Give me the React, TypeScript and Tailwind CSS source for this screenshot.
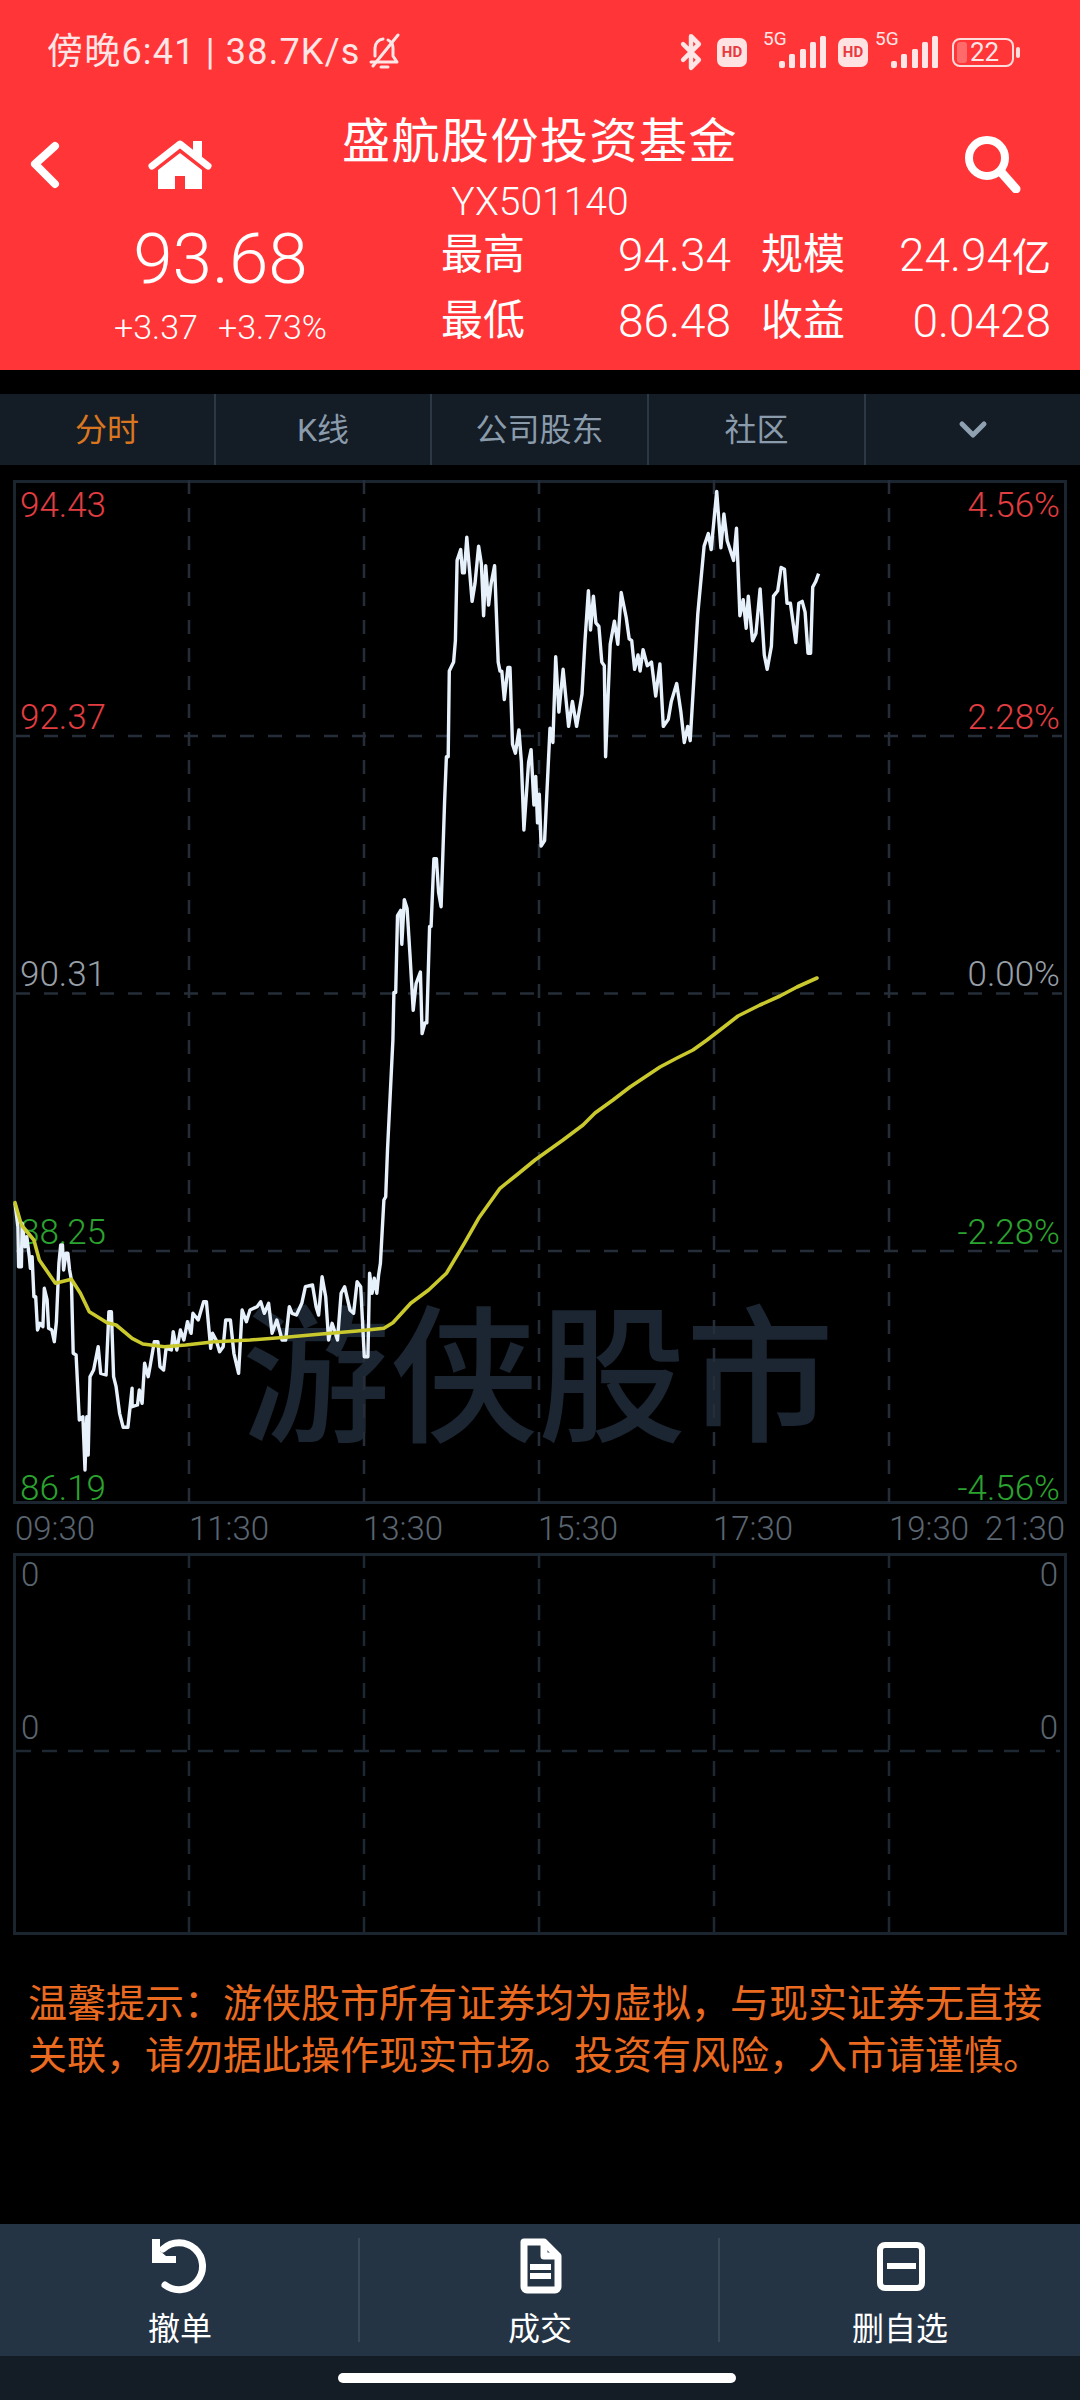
import { Bluetooth } from 'lucide-react';

type Pt = [number, number];

// traced from the crops: each trace has its own scale
const fromLow = (p: Pt[]): Pt[] => p.map(([x, y]) => [x / 2.8, 1150 + y / 3]);
const fromMid = (p: Pt[]): Pt[] => p.map(([x, y]) => [x / 2.8, 480 + y / 2.8]);
const fromRight = (p: Pt[]): Pt[] => p.map(([x, y]) => [420 + x / 2.376, 480 + y / 2.8]);

const priceLine: Pt[] = [
  ...fromLow([
    [42, 160], [50, 230], [52, 350], [60, 350], [62, 220], [70, 290], [75, 260], [82, 320], [85, 355], [90, 320],
    [95, 440], [100, 440], [105, 540], [112, 520], [120, 530], [124, 415], [132, 450], [136, 535], [145, 540],
    [152, 575], [158, 515], [165, 340], [170, 285], [175, 285], [178, 360], [185, 310], [190, 310], [195, 360],
    [200, 390], [205, 610], [213, 615], [222, 810], [232, 800], [238, 960], [243, 800], [247, 915], [252, 680],
    [262, 660], [275, 590], [282, 670], [297, 675], [305, 485], [312, 485], [318, 680], [325, 710], [335, 790],
    [345, 832], [358, 832], [370, 715], [370, 770], [385, 765], [390, 720], [398, 760], [405, 640], [415, 680],
    [420, 650], [432, 575], [442, 575], [448, 650], [458, 660], [465, 595], [480, 600], [485, 545], [495, 600],
    [505, 540], [515, 570], [525, 515], [535, 550], [540, 490], [555, 510], [570, 455], [578, 455], [590, 595],
    [595, 550], [605, 570], [615, 605], [625, 590], [632, 510], [645, 510], [655, 610], [668, 670], [678, 480],
    [690, 515], [700, 480], [720, 470], [730, 455], [740, 490], [752, 460], [762, 550], [775, 510], [790, 570],
    [800, 570], [810, 470], [818, 490], [830, 495], [845, 460], [855, 410], [875, 405], [885, 470], [892, 495],
    [902, 380], [912, 440], [920, 570], [930, 520], [945, 570], [955, 430], [965, 410], [980, 480], [990, 490],
    [1000, 395], [1010, 410], [1020, 620], [1030, 620], [1035, 370], [1042, 430], [1048, 385], [1055, 430],
    [1060, 375], [1065, 340], [1075, 150], [1080, 140], [1085, 0],
  ]),
  ...fromMid([
    [1100, 1568], [1103, 1435], [1108, 1435], [1113, 1220], [1122, 1205], [1125, 1300], [1132, 1175], [1140, 1200],
    [1148, 1330], [1157, 1485], [1165, 1410], [1177, 1378], [1182, 1550], [1190, 1520], [1195, 1520], [1203, 1250],
    [1207, 1250], [1215, 1060], [1222, 1060], [1228, 1155], [1235, 1195], [1245, 900], [1250, 775], [1255, 775],
    [1258, 535], [1270, 510], [1275, 450], [1280, 225], [1290, 195], [1295, 260], [1300, 260], [1307, 160],
    [1322, 340], [1330, 290], [1340, 185], [1348, 235], [1354, 380], [1360, 240], [1368, 350], [1375, 290],
    [1385, 240], [1395, 510], [1400, 535], [1405, 535], [1412, 615], [1422, 525], [1428, 525], [1435, 740],
    [1443, 765], [1453, 700], [1460, 790], [1467, 980], [1480, 790], [1487, 755], [1495, 910], [1500, 830],
    [1505, 960], [1510, 880], [1515, 1025], [1525, 1010], [1540, 695], [1548, 735], [1556, 495],
  ]),
  ...fromRight([
    [330, 650], [340, 530], [353, 690], [362, 620], [372, 690], [385, 600], [392, 450], [400, 310], [405, 420],
    [412, 325], [418, 400], [425, 410], [432, 510], [438, 520], [441, 775], [452, 460], [462, 395], [470, 460],
    [478, 315], [490, 385], [497, 445], [503, 450], [510, 530], [518, 490], [523, 535], [530, 475], [540, 520],
    [550, 510], [560, 605], [570, 515], [578, 690], [590, 670], [597, 620], [610, 570], [620, 650], [628, 735],
    [636, 690], [642, 730], [650, 570], [660, 375], [675, 185], [685, 150], [692, 195], [705, 32], [715, 190],
    [722, 95], [730, 170], [745, 225], [752, 135], [760, 380], [768, 335], [775, 415], [780, 325], [790, 450],
    [798, 430], [808, 305], [818, 490], [825, 530], [835, 465], [840, 325], [850, 310], [858, 245], [866, 250],
    [872, 345], [880, 345], [893, 455], [900, 345], [908, 340], [915, 370], [922, 485], [928, 485], [933, 300],
    [940, 285], [947, 262],
  ]),
];

const avgLine: Pt[] = [
  ...fromLow([
    [42, 158], [60, 225], [95, 270], [110, 330], [155, 400], [200, 388], [225, 430], [250, 485], [300, 518],
    [325, 525], [370, 565], [400, 582], [460, 590], [520, 585], [600, 575], [700, 570], [800, 562], [900, 552],
    [1000, 543], [1075, 535], [1100, 518], [1150, 460], [1200, 420], [1250, 370], [1300, 280], [1340, 205],
    [1400, 115], [1450, 72],
  ]),
  [535, 1160], [563, 1140], [583, 1125], [595, 1113], [613, 1100], [630, 1087], [645, 1077],
  [660, 1067], [677, 1058], [693, 1050], [707, 1040], [720, 1030], [738, 1016], [760, 1005], [780, 996],
  [797, 987], [817, 978],
];

const toPoints = (p: Pt[]) => p.map(([x, y]) => `${x.toFixed(1)},${y.toFixed(1)}`).join(' ');

const tabs = ['分时', 'K线', '公司股东', '社区'];
const gridX = [189, 364, 539, 714, 889];

// full-width punctuation, as in the app
const noteLine1 = '温馨提示\uFF1A游侠股市所有证券均为虚拟\uFF0C与现实证券无直接';
const noteLine2 = '关联\uFF0C请勿据此操作现实市场。投资有风险\uFF0C入市请谨慎。';

function SignalBars() {
  return (
    <svg width="48" height="32" viewBox="0 0 48 32" fill="currentColor">
      <rect x="1" y="25" width="6" height="7" rx="2" />
      <rect x="11" y="18" width="6" height="14" rx="1.5" />
      <rect x="22" y="13" width="6" height="19" rx="1.5" />
      <rect x="32" y="6" width="6" height="26" rx="1.5" />
      <rect x="42" y="0" width="6" height="32" rx="1.5" />
    </svg>
  );
}

function HdBadge() {
  return (
    <div className="w-[30px] h-[29px] rounded-[7px] bg-[#ffe3e3] flex items-center justify-center text-[#e83a40] text-[15px] font-bold leading-none">
      HD
    </div>
  );
}

function StatusBar() {
  return (
    <div className="h-[104px] flex items-center justify-between pl-[47px] pr-[60px] text-[#ffe6e6]">
      <div className="flex items-center">
        <span className="text-[36px] tracking-[1.2px] leading-none whitespace-nowrap">傍晚6:41 | 38.7K/s</span>
        <svg className="ml-[6px]" width="38" height="38" viewBox="0 0 38 38" fill="none" stroke="currentColor" strokeWidth="3" strokeLinecap="round" strokeLinejoin="round">
          <path d="M5 29h26l-4-6V15a9 9 0 0 0-5-8" />
          <path d="M9 23v-8a9 9 0 0 1 8-9" />
          <path d="M7 33 32 2" />
          <path d="M15 34h7" />
        </svg>
      </div>
      <div className="flex items-center">
        <Bluetooth className="w-[38px] h-[46px] -mx-[7px]" strokeWidth={2.8} />
        <div className="ml-[14px]"><HdBadge /></div>
        <div className="relative ml-[14px] w-[65px] h-[32px] flex justify-end">
          <span className="absolute -top-[7px] left-[2px] text-[19px] leading-none">5G</span>
          <SignalBars />
        </div>
        <div className="ml-[12px]"><HdBadge /></div>
        <div className="relative ml-[7px] w-[63px] h-[32px] flex justify-end">
          <span className="absolute -top-[7px] left-0 text-[19px] leading-none">5G</span>
          <SignalBars />
        </div>
        <div className="ml-[14px] flex items-center">
          <div className="w-[62px] h-[29px] rounded-[8px] border-2 border-[#ffdcdc] flex items-center pl-[3px]">
            <div className="w-[10px] h-[21px] rounded-[3px] bg-[#ff6b6b]" />
            <span className="ml-[3px] text-[26px] leading-none">22</span>
          </div>
          <div className="ml-[2px] w-[4px] h-[11px] rounded-full bg-[#ffdcdc]" />
        </div>
      </div>
    </div>
  );
}

function NavBar() {
  return (
    <div className="h-[120px] grid grid-cols-[280px_1fr_280px] items-center text-white">
      <svg width="200" height="75" viewBox="0 0 200 75" className="ml-[20px] -mt-[2px]">
        <path d="M35 20 15 38 35 58" fill="none" stroke="white" strokeWidth="8" strokeLinecap="round" strokeLinejoin="round" />
        <path d="M132 40 160 18 188 40" fill="none" stroke="white" strokeWidth="7" strokeLinecap="round" strokeLinejoin="round" />
        <path d="M173 15h9v17l-9-7z" fill="white" />
        <path d="M138 44 160 27l22 17v19h-17V50h-10v13h-17z" fill="white" />
      </svg>
      <div className="flex flex-col items-center">
        <div className="h-[76px] flex items-center text-[48px] tracking-[1.5px] leading-none whitespace-nowrap">盛航股份投资基金</div>
        <div className="h-[44px] flex items-center text-[39px] font-light leading-none">YX501140</div>
      </div>
      <div className="flex justify-end pr-[58px]">
        <svg width="58" height="58" viewBox="0 0 58 58" fill="none" stroke="white" strokeLinecap="round">
          <circle cx="23" cy="23" r="18" strokeWidth="8" />
          <path d="M37 37 52 54" strokeWidth="9" />
        </svg>
      </div>
    </div>
  );
}

function StatRow({ a, b, c, d, unit }: { a: string; b: string; c: string; d: string; unit?: string }) {
  return (
    <div className="h-[66px] flex items-center gap-[30px]">
      <div className="w-[290px] flex items-center justify-between">
        <span className="text-[42px] leading-none">{a}</span>
        <span className="text-[46px] font-light leading-none">{b}</span>
      </div>
      <div className="w-[290px] flex items-center justify-between">
        <span className="text-[42px] leading-none">{c}</span>
        <span className="text-[46px] font-light leading-none">
          {d}
          {unit && <span className="text-[39px] font-normal">{unit}</span>}
        </span>
      </div>
    </div>
  );
}

function Header() {
  return (
    <header className="h-[370px] bg-[#ff3538] text-white flex flex-col">
      <StatusBar />
      <NavBar />
      <div className="flex">
        <div className="w-[441px] flex flex-col items-center">
          <div className="mt-[-1px] h-[70px] flex items-center text-[71px] font-light leading-none">93.68</div>
          <div className="mt-[14px] h-[40px] flex items-center gap-[20px] text-[34px] font-light leading-none">
            <span>+3.37</span>
            <span>+3.73%</span>
          </div>
        </div>
        <div className="-mt-[2px]">
          <StatRow a="最高" b="94.34" c="规模" d="24.94" unit="亿" />
          <StatRow a="最低" b="86.48" c="收益" d="0.0428" />
        </div>
      </div>
    </header>
  );
}

function Tabs() {
  return (
    <nav className="mt-[24px] h-[71px] bg-[#141c26] grid grid-cols-[216px_216px_217px_217px_1fr] text-[32px] text-[#8a9bab]">
      {tabs.map((t, i) => (
        <div key={t} className={`flex items-center justify-center border-r-2 border-[#2a3744] ${i === 0 ? 'text-[#d9761f]' : ''}`}>
          {t}
        </div>
      ))}
      <div className="flex items-center justify-center">
        <svg width="30" height="20" viewBox="0 0 30 20" fill="none" stroke="#8fa0b0" strokeWidth="5" strokeLinecap="round" strokeLinejoin="round">
          <path d="M4 4 15 15 26 4" />
        </svg>
      </div>
    </nav>
  );
}

function AxisLabels({ left, right }: { left: string; right: string }) {
  return (
    <div className="flex justify-between pl-[4px] pr-[4px]">
      <span>{left}</span>
      <span>{right}</span>
    </div>
  );
}

function MainChart() {
  return (
    <div className="relative mt-[15px] mx-[13px] h-[1024px] border-[3px] border-[#1b2530]">
      {/* watermark */}
      <div className="absolute top-[823px] left-[226px] text-[#1b2632] text-[148px] leading-none font-medium whitespace-nowrap">
        游侠股市
      </div>
      <div className="relative text-[35px] font-light leading-[24px]">
        <div className="h-[253px] pt-[11px] pb-[6px] flex flex-col justify-between text-[#e23d40]">
          <AxisLabels left="94.43" right="4.56%" />
          <AxisLabels left="92.37" right="2.28%" />
        </div>
        <div className="h-[257px] pb-[6px] flex flex-col justify-end text-[#979fa7]">
          <AxisLabels left="90.31" right="0.00%" />
        </div>
        <div className="h-[258px] pb-[6px] flex flex-col justify-end text-[#2ba32f]">
          <AxisLabels left="88.25" right="-2.28%" />
        </div>
        <div className="h-[250px] flex flex-col justify-end text-[#2ba32f]">
          <AxisLabels left="86.19" right="-4.56%" />
        </div>
      </div>
      <svg className="absolute -top-[3px] -left-[3px] overflow-visible" width="1054" height="1024" viewBox="13 480 1054 1024">
        <g stroke="#252e38" strokeWidth="2.5" strokeDasharray="14 14" fill="none">
          {gridX.map((x) => (
            <line key={x} x1={x} y1="480" x2={x} y2="1503" />
          ))}
          {[736, 993.5, 1251].map((y) => (
            <line key={y} x1="16" y1={y} x2="1062" y2={y} />
          ))}
        </g>
        <polyline points={toPoints(priceLine)} fill="none" stroke="#e6f1fb" strokeWidth="3.4" strokeLinejoin="round" />
        <polyline points={toPoints(avgLine)} fill="none" stroke="#c9c92e" strokeWidth="3.6" strokeLinejoin="round" strokeLinecap="round" />
      </svg>
    </div>
  );
}

function TimeAxis() {
  return (
    <div className="h-[49px] pl-[15px] grid grid-cols-[174px_174px_175px_175px_176px_96px_auto] items-center text-[33px] font-light leading-none text-[#5a6570]">
      <span>09:30</span>
      <span>11:30</span>
      <span>13:30</span>
      <span>15:30</span>
      <span>17:30</span>
      <span>19:30</span>
      <span>21:30</span>
    </div>
  );
}

function VolumeChart() {
  return (
    <div className="relative mx-[13px] h-[382px] border-[3px] border-[#1b2530] text-[33px] font-light leading-[28px] text-[#5a6570]">
      <div className="h-[195px] pt-[5px] pb-[9px] flex flex-col justify-between">
        <div className="flex justify-between pl-[5px] pr-[6px]">
          <span>0</span>
          <span>0</span>
        </div>
        <div className="flex justify-between pl-[5px] pr-[6px]">
          <span>0</span>
          <span>0</span>
        </div>
      </div>
      <svg className="absolute -top-[3px] -left-[3px]" width="1054" height="382" viewBox="13 1553 1054 382">
        <g stroke="#1e2833" strokeWidth="2.5" strokeDasharray="15 11" fill="none">
          {gridX.map((x) => (
            <line key={x} x1={x} y1="1553" x2={x} y2="1934" />
          ))}
          <line x1="16" y1="1751" x2="1060" y2="1751" />
        </g>
      </svg>
    </div>
  );
}

function UndoIcon() {
  return (
    <svg className="ml-[20px]" width="120" height="70" viewBox="0 0 120 70" fill="none" stroke="white">
      <path d="M33 18A23.5 23.5 0 1 1 35 54" strokeWidth="7" strokeLinecap="round" />
      <path d="M22 8h8v12l6 5h10v7H22z" fill="white" stroke="none" />
    </svg>
  );
}

function DocIcon() {
  return (
    <svg className="ml-[40px]" width="120" height="70" viewBox="0 0 120 70" fill="none" stroke="white" strokeWidth="7" strokeLinejoin="round">
      <path d="M24 11h20l14 14v31a3 3 0 0 1-3 3H27a3 3 0 0 1-3-3z" />
      <path d="M44 11v14h14" />
      <path d="M30 36h21M30 45h21" strokeWidth="6" />
    </svg>
  );
}

function MinusIcon() {
  return (
    <svg className="ml-[2px]" width="120" height="70" viewBox="0 0 120 70" fill="none" stroke="white">
      <rect x="39" y="14" width="42" height="43" rx="5" strokeWidth="6" />
      <path d="M46 35h29" strokeWidth="6" />
    </svg>
  );
}

function BottomBar() {
  const items = [
    { label: '撤单', icon: <UndoIcon /> },
    { label: '成交', icon: <DocIcon /> },
    { label: '删自选', icon: <MinusIcon /> },
  ];
  return (
    <div className="h-[132px] bg-[#243445] grid grid-cols-3 text-white">
      {items.map((it, i) => (
        <div key={it.label} className="relative flex flex-col items-center pt-[7px]">
          {it.icon}
          <span className="mt-[12px] text-[32px] leading-none">{it.label}</span>
          {i < 2 && <div className="absolute right-0 top-[14px] bottom-[14px] w-[2px] bg-[#394857]" />}
        </div>
      ))}
    </div>
  );
}

export default function App() {
  return (
    <div className="w-[1080px] h-[2400px] bg-black flex flex-col overflow-hidden font-['Roboto','Noto_Sans_CJK_SC',sans-serif]">
      <Header />
      <Tabs />
      <MainChart />
      <TimeAxis />
      <VolumeChart />
      <p className="mt-[43px] pl-[28px] text-[39px] leading-[52px] text-[#ea6a20] whitespace-nowrap">
        {noteLine1}
        <br />
        {noteLine2}
      </p>
      <div className="flex-1" />
      <BottomBar />
      <div className="h-[44px] bg-[#141c26] pt-[17px] pl-[338px]">
        <div className="w-[398px] h-[10px] rounded-full bg-white" />
      </div>
    </div>
  );
}
